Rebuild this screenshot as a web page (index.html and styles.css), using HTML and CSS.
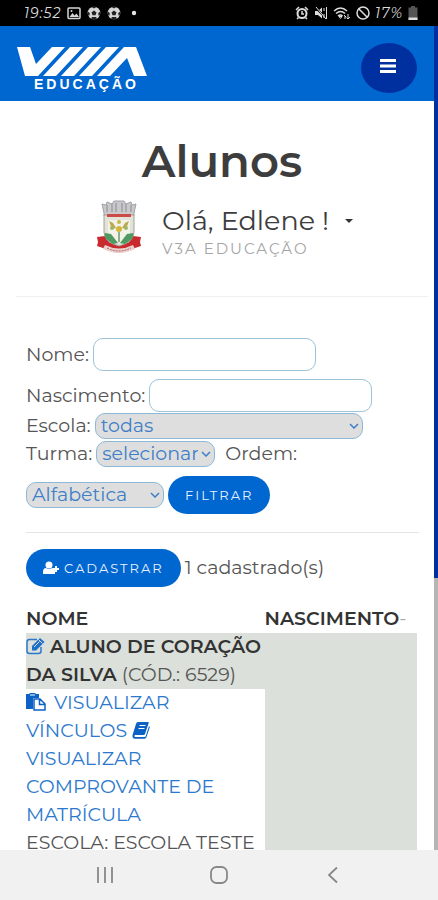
FILE: index.html
```html
<!DOCTYPE html>
<html lang="pt-BR">
<head>
<meta charset="utf-8">
<meta name="viewport" content="width=device-width, initial-scale=1">
<title>Alunos</title>
<link rel="stylesheet" href="styles.css">
</head>
<body>
<svg class="sprite" aria-hidden="true">
  <symbol id="ball" viewBox="0 0 14 14">
    <circle cx="7" cy="7" r="6.300" fill="#d6d6d6"/>
    <path d="M7 4.600l2.500 1.800-1 2.900h-3l-1-2.900zM4.500.9L7 2.400 9.500.9 8 .2H6zM.8 5.500l2 1.500-.4 2.700-1.400-.6zM13.200 5.500l-2 1.500.4 2.700 1.400-.6zM4 12.500l1-1.500h4l1 1.500-3 1z" fill="#222"/>
  </symbol>
  <symbol id="chevron" viewBox="0 0 10 6"><path d="M1 1l4 4 4-4" fill="none" stroke="#3f7fc8" stroke-width="1.500"/></symbol>
</svg>
<div class="phone">
  <div class="status">
    <div class="status-group">
      <span class="clock">19:52</span>
      <svg width="14" height="14" viewBox="0 0 14 14"><rect x="1" y="2" width="12" height="10.500" rx="1" fill="none" stroke="#d6d6d6" stroke-width="1.500"/><path d="M2.500 11l3-4 2 2.500 2-2 2.500 3.500z" fill="#d6d6d6"/><circle cx="4.500" cy="5" r="1" fill="#d6d6d6"/></svg>
      <svg width="14" height="14"><use href="#ball"/></svg>
      <svg width="14" height="14"><use href="#ball"/></svg>
      <svg width="14" height="14" viewBox="0 0 14 14"><circle cx="7" cy="7" r="2.200" fill="#e4e4e4"/></svg>
    </div>
    <div class="status-group status-right">
      <svg width="14" height="14" viewBox="0 0 14 14"><circle cx="7" cy="7.500" r="4.500" fill="none" stroke="#ddd" stroke-width="2"/><path d="M7 5v3h2M1 4l3-3M13 4l-3-3M3.500 11.500L2 13M10.500 11.500L12 13" fill="none" stroke="#ddd" stroke-width="1.500"/></svg>
      <svg width="14" height="14" viewBox="0 0 14 14"><path d="M1 5h3l4-3.500v11L4 9H1z" fill="#ddd"/><path d="M1 1l12 12" stroke="#000" stroke-width="2"/><path d="M2 1l10 12M10 2v3M10 8v4M12.500 1v12" stroke="#ddd" fill="none"/></svg>
      <svg width="18" height="14" viewBox="0 0 18 14"><path d="M1 5q6.500-6 13 0M3 7.500q4.500-4 9 0M5 10q2.500-2 4.500 0" fill="none" stroke="#ddd" stroke-width="1.500"/><path d="M7.500 12.500l-1.500-2h3zM11 9l2 2M15 8v5M12 13v-3M13.500 11.500l1.500 1.500 2-2" fill="none" stroke="#ddd"/></svg>
      <svg width="14" height="14" viewBox="0 0 14 14"><path d="M2.500 2.500l9 9" stroke="#ddd" stroke-width="1.500"/><circle cx="7" cy="7" r="6" fill="none" stroke="#ddd" stroke-width="1.500"/></svg>
      <span class="clock">17%</span>
      <svg width="10" height="14" viewBox="0 0 10 14"><path d="M3 0h4v1.500h2.500V14h-9V1.500H3z" fill="#555"/><path d="M.5 11.500h9V14h-9z" fill="#ddd"/></svg>
    </div>
  </div>

  <div class="viewport">
    <div class="page">
      <header class="topbar">
        <a class="brand" href="#" aria-label="Educação">
          <svg width="130" height="30" viewBox="0 0 130 30"><path d="M0 0h13l6 17L35 0h13L21 29H8zM53 0h13L39 29H26zM71 0h13L57 29H44zM89 0h13L75 29H62zM107 0h12l11 29h-13l-7-18L93 29H80z" fill="#fff"/></svg>
          <span class="brand-name">EDUCAÇÃO</span>
        </a>
        <button class="menu" type="button" aria-label="Menu"><svg width="18" height="16" viewBox="0 0 18 16"><path d="M1 2.500h16M1 8h16M1 13.500h16" stroke="#fff" stroke-width="3"/></svg></button>
      </header>

      <main>
        <section class="intro">
          <h1>Alunos</h1>
          <div class="user">
            <svg class="crest" width="46" height="54" viewBox="0 0 46 54">
              <path d="M1 37l8-1 5 7h18l5-7 8 1-1 5 1 4-9 3q-13 7-26 0l-9-3 1-4z" fill="#c92a2e"/>
              <path d="M6 4l4 1 1-3 5 2 2-3h10l2 3 5-2 1 3 4-1-2 9v3H8v-3z" fill="#c9c9cc" stroke="#a2a2a6"/>
              <path d="M11 5v7M16 4v8M20 3v9M26 3v9M30 4v8M35 5v7" stroke="#8d8d91"/>
              <path d="M8 15h30v17q0 10-15 14Q8 42 8 32z" fill="#e2e3d8" stroke="#a0a09a"/>
              <path d="M11 14h24v3H11z" fill="#cc4a46"/>
              <path d="M12 20h22v12q-1 7-11 11-10-4-11-11z" fill="#f2f2e8"/>
              <path d="M13 21l4 2 3 5-4 1zM33 21l-4 2-3 5 4 1z" fill="#b9a84c"/>
              <circle cx="23" cy="22" r="2" fill="#c9b84b"/><circle cx="23" cy="29" r="3" fill="#d4b53c"/><circle cx="16" cy="28" r="2" fill="#a3b467"/><circle cx="30" cy="28" r="2" fill="#a3b467"/>
              <path d="M9 33l6 1 7 9-5 1-8-6zM37 33l-6 1-7 9 5 1 8-6z" fill="#4e9a60"/>
              <path d="M23 32v10" stroke="#8fb08a" stroke-width="2"/>
              <path d="M9 45q14 7 28 0l2 4q-16 8-32 0z" fill="#e9d3d0"/><path d="M11 48q12 6 24 0" fill="none" stroke="#b85a58" stroke-dasharray="2 1"/>
            </svg>
            <div>
              <div class="hello">Olá, Edlene ! <svg width="8" height="4" viewBox="0 0 8 4"><path d="M0 0h8L4 4z" fill="#333"/></svg></div>
              <div class="org">V3A EDUCAÇÃO</div>
            </div>
          </div>
        </section>

        <section class="content">
          <form class="filters">
            <div class="field tall"><label for="nome">Nome:</label><input id="nome" type="text"></div>
            <div class="field tall"><label for="nasc">Nascimento:</label><input id="nasc" type="text"></div>
            <div class="field"><label for="escola">Escola:</label><span class="pick wide"><select id="escola"><option>todas</option></select><svg width="10" height="6"><use href="#chevron"/></svg></span></div>
            <div class="field"><label for="turma">Turma:</label><span class="pick small"><select id="turma"><option>selecionar</option></select><svg width="10" height="6"><use href="#chevron"/></svg></span><label class="order" for="ordem">Ordem:</label></div>
            <div class="field last"><span class="pick medium"><select id="ordem"><option>Alfabética</option></select><svg width="10" height="6"><use href="#chevron"/></svg></span><button class="pill" type="submit">FILTRAR</button></div>
          </form>
          <div class="actions">
            <button class="pill" type="button"><svg width="16" height="14" viewBox="0 0 16 14"><circle cx="6" cy="4" r="3.500" fill="#fff"/><path d="M0 13v-2q0-4 3-4 3 2 6 0 3 0 3 4v2zM10 7h2V5h2v2h2v2h-2v2h-2V9h-2z" fill="#fff"/></svg>CADASTRAR</button>
            <span>1 cadastrado(s)</span>
          </div>
          <table>
            <thead><tr><th>Nome</th><th>Nascimento<span class="dash">-</span></th></tr></thead>
            <tbody><tr>
              <td>
                <a href="#" aria-label="Editar"><svg width="19" height="18" viewBox="0 0 19 18"><path d="M15 10v4q0 2.500-2.500 2.500h-9Q1 16.500 1 14V5q0-2.500 2.500-2.500H11" fill="none" stroke="#2b78cc" stroke-width="1.500"/><path d="M6 9l8-8 4.500 4-8.500 8.500H6z" fill="#1d6fc9"/><path d="M8 10l5.500-5.500M12.500 2.500l4 4" stroke="#dbe0da"/></svg></a>
                <strong>Aluno de Coração<br>da Silva</strong> (Cód.: 6529)
                <div class="details">
                  <a href="#"><svg class="lead" width="20" height="18" viewBox="0 0 20 18"><path d="M0 1h3.500V0h6v1H13v4H7v11H0z" fill="#0b62c4"/><path d="M4 2h5" stroke="#fff"/><path d="M8 6h6l5 5v6H8zM13.500 6v5.500H19" fill="#fff" stroke="#0b62c4" stroke-width="1.500"/></svg> Visualizar<br>Vínculos</a>
                  <a href="#"><svg width="18" height="18" viewBox="0 0 18 18"><path d="M6 1h10q1 0 .7 1L13 13q-.4 1-1.500 1H3q-1.500 1 0 2h9.500q1 0 1.300-1L17 5q1 .5.700 1.500L14.500 16q-.5 1.700-2 1.700H3Q0 17.500.5 14L4 3q.5-2 2-2z" fill="#0b62c4"/><path d="M7.500 4.500h6M6.500 7.500h6" stroke="#fff"/></svg><br>Visualizar<br>Comprovante de<br>Matrícula</a>
                  <br>Escola: Escola Teste
                </div>
              </td>
              <td></td>
            </tr></tbody>
          </table>
        </section>
      </main>
    </div>
    <div class="track"><div class="thumb"></div></div>
  </div>

  <nav class="navkeys" aria-label="Sistema">
    <button type="button" aria-label="Recentes"><svg width="20" height="20" viewBox="0 0 20 20"><path d="M3 2v16M10 2v16M17 2v16" stroke="#888" stroke-width="1.800"/></svg></button>
    <button type="button" aria-label="Início"><svg width="20" height="20" viewBox="0 0 20 20"><rect x="2" y="2" width="16" height="16" rx="5.500" fill="none" stroke="#888" stroke-width="1.800"/></svg></button>
    <button type="button" aria-label="Voltar"><svg width="20" height="20" viewBox="0 0 20 20"><path d="M14 2.500L6 10l8 7.500" fill="none" stroke="#888" stroke-width="1.800"/></svg></button>
  </nav>
</div>
</body>
</html>
```
FILE: styles.css
```css
* { box-sizing: border-box; }
body {
  margin: 0;
  font-family: Montserrat, Inter, "Open Sans", sans-serif;
  font-size: 19px;
  line-height: 28px;
  color: #555;
  background: #fff;
}
button, input, select { font: inherit; }
svg { flex: none; }
a { color: #2b78cc; text-decoration: none; }
.sprite { position: absolute; width: 0; height: 0; }
.phone { display: flex; flex-direction: column; height: 100vh; overflow: hidden; }

.status {
  flex: none;
  display: flex;
  justify-content: space-between;
  align-items: center;
  height: 26px;
  padding: 0 20px 0 24px;
  background: #000;
  color: #ddd;
}
.status-group { display: flex; align-items: center; gap: 6px; }
.status-right { gap: 5px; }
.clock { font-size: 14px; font-style: italic; font-weight: 400; letter-spacing: 1px; }

.viewport { flex: 1; min-height: 0; display: flex; }
.page { flex: 1; min-width: 0; overflow: hidden; }
.track { flex: none; width: 4px; background: #b5b5b5; }
.thumb { height: 67%; background: #0030a0; }

.topbar {
  display: flex;
  justify-content: space-between;
  align-items: center;
  height: 75px;
  padding: 8px 17px 0;
  background: #0066d0;
}
.brand { display: flex; flex-direction: column; color: #fff; padding-top: 2px; }
.brand-name {
  padding-left: 17px;
  font-family: "Liberation Sans", sans-serif;
  font-size: 14px;
  font-weight: 700;
  line-height: 14px;
  letter-spacing: 3px;
}
.menu {
  display: grid;
  place-items: center;
  width: 56px;
  height: 50px;
  padding: 0 2px 4px 0;
  border: 0;
  border-radius: 50%;
  background: #0030a0;
}

.intro {
  margin: 0 6px 0 16px;
  padding: 32px 0 35px;
  border-bottom: 1px solid #f0f0f0;
}
h1 { margin: 0; text-align: center; font-size: 45px; line-height: 56px; font-weight: 600; color: #3d3d3d; }
.user { display: flex; gap: 20px; padding: 11px 0 0 80px; }
.hello { display: flex; align-items: center; gap: 16px; font-size: 27px; line-height: 32px; color: #3d3d3d; margin-top: 5px; }
.org { font-size: 15px; line-height: 24px; letter-spacing: 2px; color: #a5a5a5; }

.content { padding: 41px 15px 0 26px; }
.field { display: flex; align-items: center; gap: 4px; height: 28px; }
.tall { height: 33px; margin-bottom: 8px; }
.tall + .tall { margin-bottom: 0; }
.field input {
  width: 223px;
  height: 33px;
  padding: 0 8px;
  border: 1px solid #9cc3d8;
  border-radius: 10px;
  background: #fff;
}
.pick { position: relative; display: flex; }
.pick select {
  width: 100%;
  height: 26px;
  padding: 0 16px 0 5px;
  appearance: none;
  border: 1px solid #8db8d8;
  border-radius: 10px;
  background: #dedede;
  color: #3f7fc8;
  line-height: 24px;
}
.pick svg { position: absolute; right: 4px; top: 10px; pointer-events: none; }
.wide { width: 268px; }
.small { width: 119px; }
.medium { width: 138px; }
.order { margin-left: 6px; }
.last { height: 38px; margin-top: 8px; }
.pill {
  display: flex;
  align-items: center;
  gap: 5px;
  height: 38px;
  padding: 0 17px;
  border: 0;
  border-radius: 19px;
  background: #0066d0;
  color: #e8f2ff;
  font-size: 13px;
  letter-spacing: 2px;
}
.actions {
  display: flex;
  align-items: center;
  gap: 4px;
  margin-top: 18px;
  padding: 16px 0 18px;
  border-top: 1px solid #e4e4e4;
}

table { width: calc(100% - 2px); border-collapse: collapse; table-layout: fixed; text-transform: uppercase; }
th, td { padding: 0; text-align: left; vertical-align: top; }
th { font-weight: 600; color: #333; white-space: nowrap; }
th:first-child { width: 61%; }
strong { font-weight: 600; color: #333; }
.dash { font-weight: 400; color: #aaa; }
td { background: #dbe0da; white-space: nowrap; }
td svg { vertical-align: -2px; }
.details { background: #fff; }
.lead { margin-right: 3px; }

.navkeys {
  flex: none;
  display: flex;
  justify-content: center;
  gap: 94px;
  height: 50px;
  background: #f1f1f1;
}
.navkeys button { display: grid; place-items: center; width: 20px; padding: 0; border: 0; background: none; }
```
